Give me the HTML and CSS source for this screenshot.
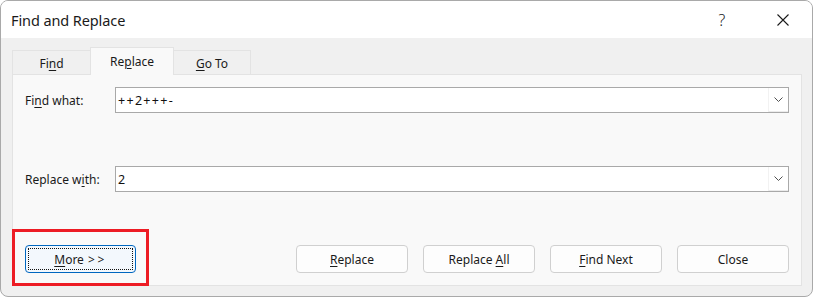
FILE: index.html
```html
<!DOCTYPE html>
<html>
<head>
<meta charset="utf-8">
<link rel="stylesheet" href="styles.css">
</head>
<body>
<div class="window">
  <div class="titlebar">
    <span class="title">Find and Replace</span>
    <div class="title-buttons">
      <span class="help">?</span>
      <svg class="close-x" width="12" height="12" viewBox="0 0 12 12"><path d="M0.5 0.5 L11.5 11.5 M11.5 0.5 L0.5 11.5" stroke="#1a1a1a" stroke-width="1.1" fill="none"/></svg>
    </div>
  </div>
  <div class="content">
    <div class="tabs">
      <div class="tab tab-find"><span>Fi<u>n</u>d</span></div>
      <div class="tab tab-active"><span>Re<u>p</u>lace</span></div>
      <div class="tab tab-goto"><span><u>G</u>o To</span></div>
    </div>
    <div class="panel">
      <div class="row">
        <label class="label">Fi<u>n</u>d what:</label>
        <div class="combo">
          <span class="combo-text">++2+++-</span>
          <span class="combo-btn"><svg width="9" height="5" viewBox="0 0 9 5"><path d="M0.5 0.5 L4.5 4.5 L8.5 0.5" stroke="#505050" stroke-width="1" fill="none"/></svg></span>
        </div>
      </div>
      <div class="row row-replace">
        <label class="label">Replace w<u>i</u>th:</label>
        <div class="combo">
          <span class="combo-text">2</span>
          <span class="combo-btn"><svg width="9" height="5" viewBox="0 0 9 5"><path d="M0.5 0.5 L4.5 4.5 L8.5 0.5" stroke="#505050" stroke-width="1" fill="none"/></svg></span>
        </div>
      </div>
      <div class="buttons">
        <button class="btn btn-more"><span class="focus"><span class="btn-label"><u>M</u>ore <span class="arrows">&gt;&gt;</span></span></span></button>
        <div class="btn-group">
          <button class="btn"><span class="btn-label"><u>R</u>eplace</span></button>
          <button class="btn"><span class="btn-label">Replace <u>A</u>ll</span></button>
          <button class="btn"><span class="btn-label"><u>F</u>ind Next</span></button>
          <button class="btn"><span class="btn-label">Close</span></button>
        </div>
      </div>
      <div class="highlight"></div>
    </div>
  </div>
</div>
</body>
</html>
```
FILE: styles.css
```css
* { box-sizing: border-box; }
html, body { margin: 0; padding: 0; background: #ffffff; }
body {
  font-family: "Noto Sans", "Open Sans", sans-serif;
  color: #1a1a1a;
  width: 814px;
  height: 297px;
  overflow: hidden;
}
u { text-decoration: underline; text-underline-offset: 2px; text-decoration-thickness: 1px; }

.window {
  width: 813px;
  height: 297px;
  border: 1px solid #a9a9a9;
  border-radius: 8px;
  overflow: hidden;
  background: #f0f0f0;
  display: flex;
  flex-direction: column;
}

.titlebar {
  height: 37px;
  background: #ffffff;
  display: flex;
  align-items: center;
  justify-content: space-between;
  padding-left: 10px;
  flex-shrink: 0;
}
.title { font-size: 14.5px; color: #1a1a1a; letter-spacing: -0.1px; }
.title-buttons { display: flex; align-items: center; }
.help { font-size: 16px; width: 12px; text-align: center; margin-right: 49px; color: #1a1a1a; font-weight: 300; }
.close-x { margin-right: 23px; }

.content {
  flex: 1;
  padding: 9px 10px 9px 11px;
  display: flex;
  flex-direction: column;
}

.tabs { display: flex; align-items: flex-end; height: 27px; }
.tab {
  font-size: 12px;
  height: 24px;
  display: flex;
  align-items: center;
  justify-content: center;
  border: 1px solid #e3e3e3;
  border-bottom: none;
  background: #f0f0f0;
  color: #1a1a1a;
  padding-top: 1px;
}
.tab-find { width: 78px; border-right: none; }
.tab-active { width: 84px; height: 28px; background: #f9f9f9; margin-bottom: -1px; position: relative; z-index: 1; padding-top: 0; }
.tab-goto { width: 77px; border-left: none; }

.panel {
  position: relative;
  width: 790px;
  height: 212px;
  border: 1px solid #e3e3e3;
  background: #f9f9f9;
  padding: 12px 12px 12px 12px;
  display: flex;
  flex-direction: column;
}

.row { display: flex; align-items: center; height: 26px; }
.row-replace { margin-top: 53px; }
.label { font-size: 12px; width: 90px; color: #1a1a1a; }
.combo {
  flex: 1;
  height: 26px;
  border: 1px solid #a9a9a9;
  background: #ffffff;
  display: flex;
  align-items: stretch;
}
.combo-text { flex: 1; font-size: 12.5px; letter-spacing: 1.3px; padding-left: 2px; display: flex; align-items: center; color: #111; }
.combo-btn {
  width: 20px;
  display: flex;
  align-items: center;
  justify-content: center;
  border-left: 1px solid #f2f2f2;
  border-bottom: 1px solid #ececec;
}

.buttons { margin-top: auto; display: flex; justify-content: space-between; height: 28px; }
.btn-group { display: flex; gap: 15px; }
.btn {
  width: 112px;
  height: 28px;
  font-family: inherit;
  font-size: 12px;
  color: #1a1a1a;
  background: #fdfdfd;
  border: 1px solid #d0d0d0;
  border-radius: 4px;
  padding: 0;
  display: flex;
  align-items: center;
  justify-content: center;
}
.btn-label { white-space: pre; padding-top: 1px; }
.arrows { letter-spacing: 2.5px; margin-left: 1px; }
.btn-more {
  width: 111px;
  background: #f3f8fd;
  border: 1px solid #0067c0;
  padding: 2px;
}
.focus {
  width: 100%;
  height: 100%;
  border: 1px dotted #111;
  display: flex;
  align-items: center;
  justify-content: center;
}

.highlight {
  position: absolute;
  left: -1px;
  top: 154px;
  width: 137px;
  height: 57px;
  border: 3px solid #ed1c24;
  pointer-events: none;
}
```
